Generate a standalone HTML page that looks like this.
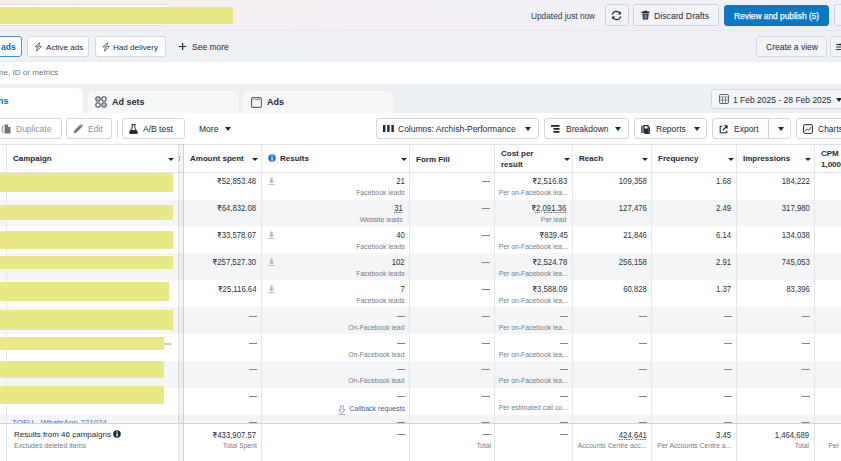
<!DOCTYPE html><html><head><meta charset="utf-8"><style>
*{box-sizing:border-box;margin:0;padding:0}
html,body{width:841px;height:461px;overflow:hidden;background:#fff;font-family:"Liberation Sans",sans-serif;color:#1c2b33}
.a{position:absolute;white-space:nowrap}
.btn{position:absolute;background:#fff;border:1px solid #d3d8de;border-radius:3px;font-size:8.5px;color:#1c2b33;white-space:nowrap}
.btn>span{position:absolute;top:50%;transform:translateY(-50%);margin-top:0.5px}
.hb{background:#f2f3f8;border-color:#cdd0d8}
.tab{position:absolute;background:#f6f7f9;border-radius:6px 6px 0 0;font-weight:bold;font-size:9px}
.vl{position:absolute;width:1px;background:#e3e6ea}
.hl{position:absolute;height:1px;background:#dfe2e6}
.hd{position:absolute;font-weight:bold;font-size:8px;color:#1c2b33;line-height:11px}
.arr{position:absolute;width:0;height:0;border-left:3px solid transparent;border-right:3px solid transparent;border-top:3.8px solid #1c2b33;margin-left:1px}
.arr2{position:absolute;width:0;height:0;border-left:3.6px solid transparent;border-right:3.6px solid transparent;border-top:4.2px solid #1c2b33;margin-left:1px}
.dl{position:absolute;width:7px;height:8px}
.t{position:absolute;font-size:8.8px;color:#26333b;text-align:right;white-space:nowrap;line-height:10px;transform:scaleX(0.88);transform-origin:100% 50%}
.s{position:absolute;font-size:7.6px;color:#737c84;text-align:right;white-space:nowrap;line-height:9px;transform:scaleX(0.9);transform-origin:100% 50%}
.dash{position:absolute;height:1px;width:8px;background:#7d868c}
.yb{position:absolute;left:0;background:#e8e986}
</style></head><body>
<div class="a" style="left:0;top:0;width:841px;height:30px;background:linear-gradient(90deg,#f7edf1 0%,#f4eff5 45%,#eef0f9 100%)"></div>
<div class="a" style="left:0;top:30px;width:841px;height:1px;background:#e6e6ee"></div>
<div class="a" style="left:-10px;top:4px;width:179px;height:22px;background:#fff;border:1px solid #e6dde3;border-radius:4px"></div>
<div class="a" style="left:0;top:7px;width:233px;height:17px;background:#e8e986"></div>
<div class="a" style="left:531px;top:11px;font-size:8.3px;color:#2f3d47">Updated just now</div>
<div class="btn hb" style="left:605px;top:4px;width:24px;height:22px"></div>
<div class="btn hb" style="left:633px;top:4px;width:86px;height:22px"><span style="left:20px;font-size:8.7px">Discard Drafts</span></div>
<div class="btn" style="left:724px;top:5px;width:105px;height:21px;background:#0a78c2;border-color:#0a78c2;color:#fff;font-weight:bold"><span style="left:9px;font-size:9.3px;font-weight:normal;-webkit-text-stroke:0.25px #fff;transform:translateY(-50%) scaleX(0.9);transform-origin:0 50%">Review and publish (5)</span></div>
<div class="btn hb" style="left:834px;top:4px;width:20px;height:22px"></div>
<svg class="a" style="left:611px;top:9.5px;" width="11" height="11" viewBox="0 0 11 11"><path d="M9.2 3.6A4.3 4.3 0 0 0 1.3 4.6M1.8 7.4A4.3 4.3 0 0 0 9.7 6.4" fill="none" stroke="#1c2b33" stroke-width="1.15"/><path d="M9.9 1.4v3.2H6.7z" fill="#1c2b33"/><path d="M1.1 9.6V6.4h3.2z" fill="#1c2b33"/></svg>
<svg class="a" style="left:640.5px;top:10px;" width="9" height="10" viewBox="0 0 9 10"><path d="M3 0.8h3v1H3z M0.6 1.6h7.8v1.4H0.6z M1.3 3.4h6.4l-0.6 6.2H1.9z" fill="#1c2b33"/><path d="M3.2 4.5v4M4.5 4.5v4M5.8 4.5v4" stroke="#f2f3f8" stroke-width="0.5"/></svg>
<div class="a" style="left:0;top:31px;width:841px;height:31px;background:linear-gradient(90deg,#eef1f4 0%,#eff1f5 50%,#eff0f7 100%)"></div>
<div class="btn" style="left:-20px;top:36px;width:42px;height:21px;border-color:#4b8fd0;color:#0a6bb8;font-weight:bold"><span style="left:20px">ads</span></div>
<div class="btn" style="left:27px;top:36px;width:62px;height:21px"><span style="left:18px;font-size:8.1px">Active ads</span></div>
<div class="btn" style="left:95px;top:36px;width:71px;height:21px"><span style="left:17px;font-size:8.1px">Had delivery</span></div>
<div class="a" style="left:192px;top:42px;font-size:8.5px">See more</div>
<svg class="a" style="left:34px;top:42px;" width="8" height="10" viewBox="0 0 8 10"><path d="M5.6 0.6L1 4.9H3.9L2.4 9.2L7.4 4.5H4.5Z" fill="none" stroke="#56616a" stroke-width="0.9" stroke-linejoin="round"/></svg>
<svg class="a" style="left:101.5px;top:42px;" width="8" height="10" viewBox="0 0 8 10"><path d="M5.6 0.6L1 4.9H3.9L2.4 9.2L7.4 4.5H4.5Z" fill="none" stroke="#56616a" stroke-width="0.9" stroke-linejoin="round"/></svg>
<svg class="a" style="left:179px;top:43px;" width="8" height="7" viewBox="0 0 8 7"><path d="M3.6 0v7M0 3.5h7.2" stroke="#1c2b33" stroke-width="1.2"/></svg>
<div class="btn" style="left:756px;top:36px;width:71px;height:21px;background:#f1f3f6"><span style="left:9px">Create a view</span></div>
<div class="btn" style="left:830px;top:36px;width:20px;height:21px;background:#f1f3f6"></div>
<svg class="a" style="left:836px;top:43px;" width="6" height="8" viewBox="0 0 6 8"><path d="M0 1.5h6M0 4h6M0 6.5h6" stroke="#1c2b33" stroke-width="0.9"/><circle cx="4" cy="1.5" r="1" fill="#1c2b33"/></svg>
<div class="a" style="left:-1px;top:68px;font-size:8.1px;color:#6a747c">ne, ID or metrics</div>
<div class="a" style="left:0;top:84px;width:841px;height:29px;background:#edf0f3"></div>
<div class="tab" style="left:-10px;top:88px;width:93px;height:26px;background:#fff;color:#0a6bb8"><span class="a" style="left:8px;top:8px">ns</span></div>
<div class="tab" style="left:88px;top:91px;width:150px;height:22px"><span class="a" style="left:24px;top:6px">Ad sets</span></div>
<div class="tab" style="left:243px;top:91px;width:150px;height:22px"><span class="a" style="left:24px;top:6px">Ads</span></div>
<svg class="a" style="left:95px;top:96px;" width="12" height="12" viewBox="0 0 12 12"><circle cx="3" cy="3" r="2.2" fill="none" stroke="#454f57" stroke-width="1.1"/><circle cx="9" cy="3" r="2.2" fill="none" stroke="#454f57" stroke-width="1.1"/><circle cx="3" cy="9" r="2.2" fill="none" stroke="#454f57" stroke-width="1.1"/><circle cx="9" cy="9" r="2.2" fill="none" stroke="#454f57" stroke-width="1.1"/><circle cx="3" cy="3" r="0.7" fill="#454f57"/><circle cx="9" cy="9" r="0.7" fill="#454f57"/></svg>
<svg class="a" style="left:251px;top:96.5px;" width="11" height="11" viewBox="0 0 11 11"><rect x="0.6" y="0.6" width="9.8" height="9.8" rx="1.2" fill="none" stroke="#5a646c" stroke-width="1.1"/><path d="M2 2.6h1M4 2.6h5" stroke="#5a646c" stroke-width="0.8"/></svg>
<div class="btn" style="left:711px;top:89px;width:140px;height:20px;background:#f3f5f8"><span style="left:21px;font-size:8.5px">1 Feb 2025 - 28 Feb 2025</span></div>
<div class="btn" style="left:-10px;top:118px;width:72px;height:21px"><span style="left:25px;color:#8c959c">Duplicate</span></div>
<div class="btn" style="left:66px;top:118px;width:46px;height:21px"><span style="left:21px;color:#8c959c">Edit</span></div>
<div class="a" style="left:117px;top:120px;width:1px;height:18px;background:#d5d9de"></div>
<div class="btn" style="left:122px;top:118px;width:63px;height:21px"><span style="left:20px">A/B test</span></div>
<div class="a" style="left:199px;top:124px;font-size:8.5px">More</div>
<div class="btn" style="left:376px;top:118px;width:163px;height:21px"><span style="left:21px">Columns: Archish-Performance</span></div>
<div class="btn" style="left:544px;top:118px;width:85px;height:21px"><span style="left:21px">Breakdown</span></div>
<div class="btn" style="left:634px;top:118px;width:73px;height:21px"><span style="left:21px">Reports</span></div>
<div class="btn" style="left:712px;top:118px;width:79px;height:21px"><span style="left:21px">Export</span></div>
<div class="btn" style="left:796px;top:118px;width:60px;height:21px"><span style="left:21px">Charts</span></div>
<svg class="a" style="left:718.5px;top:94px;" width="10" height="10" viewBox="0 0 10 10"><rect x="0.5" y="0.5" width="9" height="9" rx="1.3" fill="none" stroke="#5a646c" stroke-width="1"/><path d="M0.5 3h9M3.5 3v6.5M6.5 3v6.5M0.5 6h9" stroke="#5a646c" stroke-width="0.7"/></svg>
<div class="arr2" style="left:835px;top:98px"></div>
<svg class="a" style="left:0.5px;top:124px;" width="11" height="10" viewBox="0 0 11 10"><path d="M2.2 1.5C0.6 3 0.6 7 2.2 8.8" fill="none" stroke="#6d767d" stroke-width="0.9"/><path d="M3.5 0.6h3.6l2.4 2.4v6.4h-6z" fill="#6d767d"/><path d="M7 0.6v2.5h2.5" fill="#fff"/></svg>
<svg class="a" style="left:72.5px;top:124px;" width="10" height="10" viewBox="0 0 10 10"><path d="M0.8 9.2l0.6-2.6 5.6-5.6 2 2-5.6 5.6z" fill="#6d767d"/><path d="M7.6 0.4l2 2" stroke="#6d767d" stroke-width="1.2"/></svg>
<svg class="a" style="left:129px;top:124px;" width="9" height="10" viewBox="0 0 9 10"><path d="M2.6 0.6h3.8M3.2 0.6v3.4L0.6 8.4c-0.3 0.6 0 1 0.6 1h6.6c0.6 0 0.9-0.4 0.6-1L5.8 4V0.6" fill="none" stroke="#1c2b33" stroke-width="1"/><path d="M1.6 6h5.8l1 2.6c0.2 0.5 0 0.8-0.6 0.8H1.2c-0.6 0-0.8-0.3-0.6-0.8z" fill="#1c2b33"/></svg>
<div class="arr2" style="left:224px;top:127px"></div>
<svg class="a" style="left:382.5px;top:125px;" width="11" height="7" viewBox="0 0 11 7"><rect x="0" y="0" width="2.4" height="7" fill="#1c2b33"/><rect x="4.2" y="0" width="2.4" height="7" fill="#1c2b33"/><rect x="8.4" y="0" width="2.4" height="7" fill="#1c2b33"/></svg>
<div class="arr2" style="left:524px;top:127px"></div>
<svg class="a" style="left:551px;top:125px;" width="9" height="8" viewBox="0 0 9 8"><rect x="0" y="0" width="8.5" height="1.8" fill="#1c2b33"/><rect x="2.5" y="3" width="6" height="1.8" fill="#1c2b33"/><rect x="2.5" y="6" width="6" height="1.8" fill="#1c2b33"/></svg>
<div class="arr2" style="left:614px;top:127px"></div>
<svg class="a" style="left:640.5px;top:124.5px;" width="10" height="9" viewBox="0 0 10 9"><rect x="0.3" y="0.5" width="1.3" height="7.5" fill="#1c2b33"/><rect x="2.3" y="0" width="5.5" height="8" rx="0.6" fill="#1c2b33"/><path d="M8.4 2v6.5H3.5" fill="none" stroke="#1c2b33" stroke-width="1"/><rect x="3.5" y="1.2" width="3" height="2.3" fill="#fff"/></svg>
<div class="arr2" style="left:693px;top:127px"></div>
<svg class="a" style="left:719px;top:124.5px;" width="9" height="9" viewBox="0 0 9 9"><path d="M3.5 1.2H1.2v6.6h6.6V5.5" fill="none" stroke="#1c2b33" stroke-width="1.1"/><path d="M4 5L8 1M5.2 0.8h2.9v2.9" fill="none" stroke="#1c2b33" stroke-width="1.1"/></svg>
<div class="a" style="left:768px;top:119px;width:1px;height:19px;background:#cfd5db"></div>
<div class="arr2" style="left:777px;top:127px"></div>
<svg class="a" style="left:803px;top:124px;" width="10" height="10" viewBox="0 0 10 10"><rect x="0.6" y="0.6" width="8.8" height="8.8" rx="1.2" fill="none" stroke="#1c2b33" stroke-width="1"/><path d="M2 7.5L4.2 5l1.5 1.2L8 3.2" fill="none" stroke="#1c2b33" stroke-width="0.9"/></svg>
<div class="hl" style="left:0;top:144px;width:841px"></div>
<div class="hl" style="left:0;top:172px;width:841px"></div>
<div class="a" style="left:0;top:200px;width:841px;height:26px;background:#f4f5f7"></div>
<div class="a" style="left:0;top:253px;width:841px;height:27px;background:#f4f5f7"></div>
<div class="a" style="left:0;top:307px;width:841px;height:27px;background:#f4f5f7"></div>
<div class="a" style="left:0;top:361px;width:841px;height:27px;background:#f4f5f7"></div>
<div class="a" style="left:0;top:415px;width:841px;height:27px;background:#f4f5f7"></div>
<div class="vl" style="left:6px;top:144px;height:317px"></div>
<div class="vl" style="left:183px;top:144px;height:317px"></div>
<div class="vl" style="left:261px;top:144px;height:317px"></div>
<div class="vl" style="left:409px;top:144px;height:317px"></div>
<div class="vl" style="left:494px;top:144px;height:317px"></div>
<div class="vl" style="left:572px;top:144px;height:317px"></div>
<div class="vl" style="left:651px;top:144px;height:317px"></div>
<div class="vl" style="left:736px;top:144px;height:317px"></div>
<div class="vl" style="left:814px;top:144px;height:317px"></div>
<div class="vl" style="left:178px;top:144px;height:317px;width:6px;background:linear-gradient(90deg,rgba(0,10,20,0.12) 0,rgba(0,10,20,0.12) 1px,rgba(0,10,20,0.05) 1px,rgba(0,10,20,0.03) 5px,rgba(0,10,20,0.1) 5px,rgba(0,10,20,0.1) 6px)"></div>
<div class="yb" style="top:173px;width:173px;height:19px"></div>
<div class="yb" style="top:205px;width:173px;height:15px"></div>
<div class="yb" style="top:231px;width:173px;height:18px"></div>
<div class="yb" style="top:256px;width:173px;height:13px"></div>
<div class="yb" style="top:282px;width:169px;height:19px"></div>
<div class="yb" style="top:310px;width:173px;height:20px"></div>
<div class="yb" style="top:337px;width:164px;height:13px"></div>
<div class="yb" style="top:361px;width:164px;height:17px"></div>
<div class="yb" style="top:386px;width:164px;height:18px"></div>
<svg class="a" style="left:165px;top:343px;" width="7" height="2" viewBox="0 0 7 2"><circle cx="0.8" cy="1" r="0.65" fill="#555"/><circle cx="3" cy="1" r="0.65" fill="#555"/><circle cx="5.2" cy="1" r="0.65" fill="#555"/></svg>
<div class="hd" style="left:13px;top:153px">Campaign</div>
<div class="arr" style="left:167px;top:158px"></div>
<div class="hd" style="left:190px;top:153px">Amount spent</div>
<div class="arr" style="left:251px;top:158px"></div>
<svg class="a" style="left:267.5px;top:154px;" width="8" height="8" viewBox="0 0 8 8"><circle cx="4" cy="4" r="3.8" fill="#1877f2"/><rect x="3.4" y="3.3" width="1.3" height="3.2" fill="#fff"/><circle cx="4" cy="2.1" r="0.75" fill="#fff"/></svg>
<div class="a" style="left:179px;top:156px;width:1px;height:1.5px;background:#8a9298"></div><div class="a" style="left:179px;top:159px;width:1px;height:1.5px;background:#8a9298"></div>
<div class="hd" style="left:280px;top:153px">Results</div>
<div class="arr" style="left:400px;top:158px"></div>
<div class="hd" style="left:416px;top:154px">Form Fill</div>
<div class="hd" style="left:501px;top:148px;line-height:11px">Cost per<br>result</div>
<div class="arr" style="left:563px;top:158px"></div>
<div class="hd" style="left:579px;top:153px">Reach</div>
<div class="arr" style="left:641px;top:158px"></div>
<div class="hd" style="left:658px;top:153px">Frequency</div>
<div class="arr" style="left:727px;top:158px"></div>
<div class="hd" style="left:743px;top:153px">Impressions</div>
<div class="arr" style="left:804px;top:158px"></div>
<div class="hd" style="left:821px;top:148px;line-height:11px">CPM<br>1,000</div>
<div class="t" style="right:584.5px;top:176px;"><svg width="4.8" height="6.2" viewBox="0 0 4.6 6" style="display:inline-block;vertical-align:0px;margin-right:0.2px"><path d="M0.2 0.55H4.4M0.2 2.15H4.4M0.6 0.55H1.7C3.5 0.55 3.5 3.5 1.7 3.5H0.8L3.9 5.9" fill="none" stroke="currentColor" stroke-width="0.85"/></svg>52,853.48</div>
<svg class="a" style="left:268px;top:176.5px;" width="7" height="8" viewBox="0 0 7 8"><path d="M2.4 0.5h2.2v3.2h1.9L3.5 6.6 0.5 3.7h1.9z" fill="#b4babf"/><path d="M0.3 7.5h6.4" stroke="#b4babf" stroke-width="0.9"/></svg>
<div class="t" style="right:436.5px;top:176px;">21</div>
<div class="s" style="right:436.5px;top:188px;">Facebook leads</div>
<div class="dash" style="left:482px;top:181px"></div>
<div class="t" style="right:273.5px;top:176px;"><svg width="4.8" height="6.2" viewBox="0 0 4.6 6" style="display:inline-block;vertical-align:0px;margin-right:0.2px"><path d="M0.2 0.55H4.4M0.2 2.15H4.4M0.6 0.55H1.7C3.5 0.55 3.5 3.5 1.7 3.5H0.8L3.9 5.9" fill="none" stroke="currentColor" stroke-width="0.85"/></svg>2,516.83</div>
<div class="s" style="right:273.5px;top:188px;">Per on-Facebook lea...</div>
<div class="t" style="right:194.5px;top:176px;">109,358</div>
<div class="t" style="right:109.5px;top:176px;">1.68</div>
<div class="t" style="right:31.5px;top:176px;">184,222</div>
<div class="t" style="right:584.5px;top:203px;"><svg width="4.8" height="6.2" viewBox="0 0 4.6 6" style="display:inline-block;vertical-align:0px;margin-right:0.2px"><path d="M0.2 0.55H4.4M0.2 2.15H4.4M0.6 0.55H1.7C3.5 0.55 3.5 3.5 1.7 3.5H0.8L3.9 5.9" fill="none" stroke="currentColor" stroke-width="0.85"/></svg>64,832.08</div>
<div class="t" style="right:438.5px;top:203px;text-decoration:underline dotted #444;text-underline-offset:1px">31</div>
<div class="s" style="right:438.5px;top:215px;">Website leads</div>
<div class="dash" style="left:482px;top:208px"></div>
<div class="t" style="right:275px;top:203px;text-decoration:underline dotted #444;text-underline-offset:1px"><svg width="4.8" height="6.2" viewBox="0 0 4.6 6" style="display:inline-block;vertical-align:0px;margin-right:0.2px"><path d="M0.2 0.55H4.4M0.2 2.15H4.4M0.6 0.55H1.7C3.5 0.55 3.5 3.5 1.7 3.5H0.8L3.9 5.9" fill="none" stroke="currentColor" stroke-width="0.85"/></svg>2,091.36</div>
<div class="s" style="right:275px;top:215px;">Per lead</div>
<div class="t" style="right:194.5px;top:203px;">127,476</div>
<div class="t" style="right:109.5px;top:203px;">2.49</div>
<div class="t" style="right:31.5px;top:203px;">317,980</div>
<div class="t" style="right:584.5px;top:230px;"><svg width="4.8" height="6.2" viewBox="0 0 4.6 6" style="display:inline-block;vertical-align:0px;margin-right:0.2px"><path d="M0.2 0.55H4.4M0.2 2.15H4.4M0.6 0.55H1.7C3.5 0.55 3.5 3.5 1.7 3.5H0.8L3.9 5.9" fill="none" stroke="currentColor" stroke-width="0.85"/></svg>33,578.07</div>
<svg class="a" style="left:268px;top:230.5px;" width="7" height="8" viewBox="0 0 7 8"><path d="M2.4 0.5h2.2v3.2h1.9L3.5 6.6 0.5 3.7h1.9z" fill="#b4babf"/><path d="M0.3 7.5h6.4" stroke="#b4babf" stroke-width="0.9"/></svg>
<div class="t" style="right:436.5px;top:230px;">40</div>
<div class="s" style="right:436.5px;top:242px;">Facebook leads</div>
<div class="dash" style="left:482px;top:235px"></div>
<div class="t" style="right:273.5px;top:230px;"><svg width="4.8" height="6.2" viewBox="0 0 4.6 6" style="display:inline-block;vertical-align:0px;margin-right:0.2px"><path d="M0.2 0.55H4.4M0.2 2.15H4.4M0.6 0.55H1.7C3.5 0.55 3.5 3.5 1.7 3.5H0.8L3.9 5.9" fill="none" stroke="currentColor" stroke-width="0.85"/></svg>839.45</div>
<div class="s" style="right:273.5px;top:242px;">Per on-Facebook lea...</div>
<div class="t" style="right:194.5px;top:230px;">21,846</div>
<div class="t" style="right:109.5px;top:230px;">6.14</div>
<div class="t" style="right:31.5px;top:230px;">134,038</div>
<div class="t" style="right:584.5px;top:257px;"><svg width="4.8" height="6.2" viewBox="0 0 4.6 6" style="display:inline-block;vertical-align:0px;margin-right:0.2px"><path d="M0.2 0.55H4.4M0.2 2.15H4.4M0.6 0.55H1.7C3.5 0.55 3.5 3.5 1.7 3.5H0.8L3.9 5.9" fill="none" stroke="currentColor" stroke-width="0.85"/></svg>257,527.30</div>
<svg class="a" style="left:268px;top:257.5px;" width="7" height="8" viewBox="0 0 7 8"><path d="M2.4 0.5h2.2v3.2h1.9L3.5 6.6 0.5 3.7h1.9z" fill="#b4babf"/><path d="M0.3 7.5h6.4" stroke="#b4babf" stroke-width="0.9"/></svg>
<div class="t" style="right:436.5px;top:257px;">102</div>
<div class="s" style="right:436.5px;top:269px;">Facebook leads</div>
<div class="dash" style="left:482px;top:262px"></div>
<div class="t" style="right:273.5px;top:257px;"><svg width="4.8" height="6.2" viewBox="0 0 4.6 6" style="display:inline-block;vertical-align:0px;margin-right:0.2px"><path d="M0.2 0.55H4.4M0.2 2.15H4.4M0.6 0.55H1.7C3.5 0.55 3.5 3.5 1.7 3.5H0.8L3.9 5.9" fill="none" stroke="currentColor" stroke-width="0.85"/></svg>2,524.78</div>
<div class="s" style="right:273.5px;top:269px;">Per on-Facebook lea...</div>
<div class="t" style="right:194.5px;top:257px;">256,158</div>
<div class="t" style="right:109.5px;top:257px;">2.91</div>
<div class="t" style="right:31.5px;top:257px;">745,053</div>
<div class="t" style="right:584.5px;top:284px;"><svg width="4.8" height="6.2" viewBox="0 0 4.6 6" style="display:inline-block;vertical-align:0px;margin-right:0.2px"><path d="M0.2 0.55H4.4M0.2 2.15H4.4M0.6 0.55H1.7C3.5 0.55 3.5 3.5 1.7 3.5H0.8L3.9 5.9" fill="none" stroke="currentColor" stroke-width="0.85"/></svg>25,116.64</div>
<svg class="a" style="left:268px;top:284.5px;" width="7" height="8" viewBox="0 0 7 8"><path d="M2.4 0.5h2.2v3.2h1.9L3.5 6.6 0.5 3.7h1.9z" fill="#b4babf"/><path d="M0.3 7.5h6.4" stroke="#b4babf" stroke-width="0.9"/></svg>
<div class="t" style="right:436.5px;top:284px;">7</div>
<div class="s" style="right:436.5px;top:296px;">Facebook leads</div>
<div class="dash" style="left:482px;top:289px"></div>
<div class="t" style="right:273.5px;top:284px;"><svg width="4.8" height="6.2" viewBox="0 0 4.6 6" style="display:inline-block;vertical-align:0px;margin-right:0.2px"><path d="M0.2 0.55H4.4M0.2 2.15H4.4M0.6 0.55H1.7C3.5 0.55 3.5 3.5 1.7 3.5H0.8L3.9 5.9" fill="none" stroke="currentColor" stroke-width="0.85"/></svg>3,588.09</div>
<div class="s" style="right:273.5px;top:296px;">Per on-Facebook lea...</div>
<div class="t" style="right:194.5px;top:284px;">60,828</div>
<div class="t" style="right:109.5px;top:284px;">1.37</div>
<div class="t" style="right:31.5px;top:284px;">83,396</div>
<div class="dash" style="left:248.5px;top:316px"></div>
<div class="dash" style="left:396.5px;top:316px"></div>
<div class="dash" style="left:482px;top:316px"></div>
<div class="dash" style="left:559.5px;top:316px"></div>
<div class="dash" style="left:638.5px;top:316px"></div>
<div class="dash" style="left:723.5px;top:316px"></div>
<div class="dash" style="left:801.5px;top:316px"></div>
<div class="s" style="right:436.5px;top:323px;">On-Facebook lead</div>
<div class="s" style="right:273.5px;top:323px;">Per on-Facebook lea...</div>
<div class="dash" style="left:248.5px;top:343px"></div>
<div class="dash" style="left:396.5px;top:343px"></div>
<div class="dash" style="left:482px;top:343px"></div>
<div class="dash" style="left:559.5px;top:343px"></div>
<div class="dash" style="left:638.5px;top:343px"></div>
<div class="dash" style="left:723.5px;top:343px"></div>
<div class="dash" style="left:801.5px;top:343px"></div>
<div class="s" style="right:436.5px;top:350px;">On-Facebook lead</div>
<div class="s" style="right:273.5px;top:350px;">Per on-Facebook lea...</div>
<div class="dash" style="left:248.5px;top:369px"></div>
<div class="dash" style="left:396.5px;top:369px"></div>
<div class="dash" style="left:482px;top:369px"></div>
<div class="dash" style="left:559.5px;top:369px"></div>
<div class="dash" style="left:638.5px;top:369px"></div>
<div class="dash" style="left:723.5px;top:369px"></div>
<div class="dash" style="left:801.5px;top:369px"></div>
<div class="s" style="right:436.5px;top:376px;">On-Facebook lead</div>
<div class="s" style="right:273.5px;top:376px;">Per on-Facebook lea...</div>
<div class="dash" style="left:248.5px;top:396px"></div>
<div class="dash" style="left:396.5px;top:396px"></div>
<div class="dash" style="left:482px;top:396px"></div>
<div class="dash" style="left:559.5px;top:396px"></div>
<div class="dash" style="left:638.5px;top:396px"></div>
<div class="dash" style="left:723.5px;top:396px"></div>
<div class="dash" style="left:801.5px;top:396px"></div>
<div class="s" style="right:436.5px;top:404px;color:#3b5ca8;font-size:7.8px">Callback requests</div>
<svg class="a" style="left:338px;top:405px;" width="8" height="10" viewBox="0 0 8 10"><path d="M2.6 0.8h2.6v4h1.8L3.9 8.2 0.8 4.8h1.8z" fill="none" stroke="#8a9298" stroke-width="0.8" stroke-linejoin="round"/><path d="M0.5 9.4h7" stroke="#8a9298" stroke-width="0.8"/></svg>
<div class="s" style="right:273.5px;top:403px;">Per estimated call co...</div>
<div class="dash" style="left:248.5px;top:422px"></div>
<div class="dash" style="left:396.5px;top:422px"></div>
<div class="dash" style="left:482px;top:422px"></div>
<div class="dash" style="left:559.5px;top:422px"></div>
<div class="dash" style="left:638.5px;top:422px"></div>
<div class="dash" style="left:723.5px;top:422px"></div>
<div class="dash" style="left:801.5px;top:422px"></div>
<div class="dash" style="left:248.5px;top:422px"></div>
<div class="dash" style="left:396.5px;top:422px"></div>
<div class="dash" style="left:482px;top:422px"></div>
<div class="dash" style="left:559.5px;top:422px"></div>
<div class="dash" style="left:638.5px;top:422px"></div>
<div class="dash" style="left:723.5px;top:422px"></div>
<div class="dash" style="left:801.5px;top:422px"></div>
<div class="a" style="left:12px;top:418px;font-size:8px;color:#3b6fc4">TOFU - WhatsApp-221024</div>
<div class="a" style="left:0;top:423px;width:841px;height:38px;background:#fff;border-top:1px solid #cfd3d8"></div>
<div class="vl" style="left:6px;top:424px;height:37px"></div>
<div class="vl" style="left:183px;top:424px;height:37px"></div>
<div class="vl" style="left:261px;top:424px;height:37px"></div>
<div class="vl" style="left:409px;top:424px;height:37px"></div>
<div class="vl" style="left:494px;top:424px;height:37px"></div>
<div class="vl" style="left:572px;top:424px;height:37px"></div>
<div class="vl" style="left:651px;top:424px;height:37px"></div>
<div class="vl" style="left:736px;top:424px;height:37px"></div>
<div class="vl" style="left:814px;top:424px;height:37px"></div>
<div class="vl" style="left:178px;top:424px;height:37px;width:6px;background:linear-gradient(90deg,rgba(0,10,20,0.12) 0,rgba(0,10,20,0.12) 1px,rgba(0,10,20,0.05) 1px,rgba(0,10,20,0.03) 5px,rgba(0,10,20,0.1) 5px,rgba(0,10,20,0.1) 6px)"></div>
<div class="a" style="left:14px;top:430px;font-size:8px;color:#1c2b33">Results from 46 campaigns</div>
<svg class="a" style="left:113px;top:430px;" width="8" height="8" viewBox="0 0 8 8"><circle cx="4" cy="4" r="3.8" fill="#1c2b33"/><rect x="3.4" y="3.3" width="1.3" height="3.2" fill="#fff"/><circle cx="4" cy="2.1" r="0.75" fill="#fff"/></svg>
<div class="a" style="left:14px;top:442px;font-size:7px;color:#737c84">Excludes deleted items</div>
<div class="t" style="right:584.5px;top:430px;"><svg width="4.8" height="6.2" viewBox="0 0 4.6 6" style="display:inline-block;vertical-align:0px;margin-right:0.2px"><path d="M0.2 0.55H4.4M0.2 2.15H4.4M0.6 0.55H1.7C3.5 0.55 3.5 3.5 1.7 3.5H0.8L3.9 5.9" fill="none" stroke="currentColor" stroke-width="0.85"/></svg>433,907.57</div>
<div class="s" style="right:584.5px;top:441px;">Total Spent</div>
<div class="dash" style="left:397px;top:434px"></div>
<div class="dash" style="left:483px;top:434px"></div>
<div class="s" style="right:350px;top:441px;">Total</div>
<div class="dash" style="left:560px;top:434px"></div>
<div class="t" style="right:194.5px;top:430px;text-decoration:underline dotted #444;text-underline-offset:1px">424,641</div>
<div class="s" style="right:194.5px;top:441px;">Accounts Centre acc...</div>
<div class="t" style="right:109.5px;top:430px;">3.45</div>
<div class="s" style="right:109.5px;top:441px;">Per Accounts Centre a...</div>
<div class="t" style="right:31.5px;top:430px;">1,464,689</div>
<div class="s" style="right:31.5px;top:441px;">Total</div>
<div class="s" style="left:827px;top:441px;text-align:left">Per</div>
</body></html>
